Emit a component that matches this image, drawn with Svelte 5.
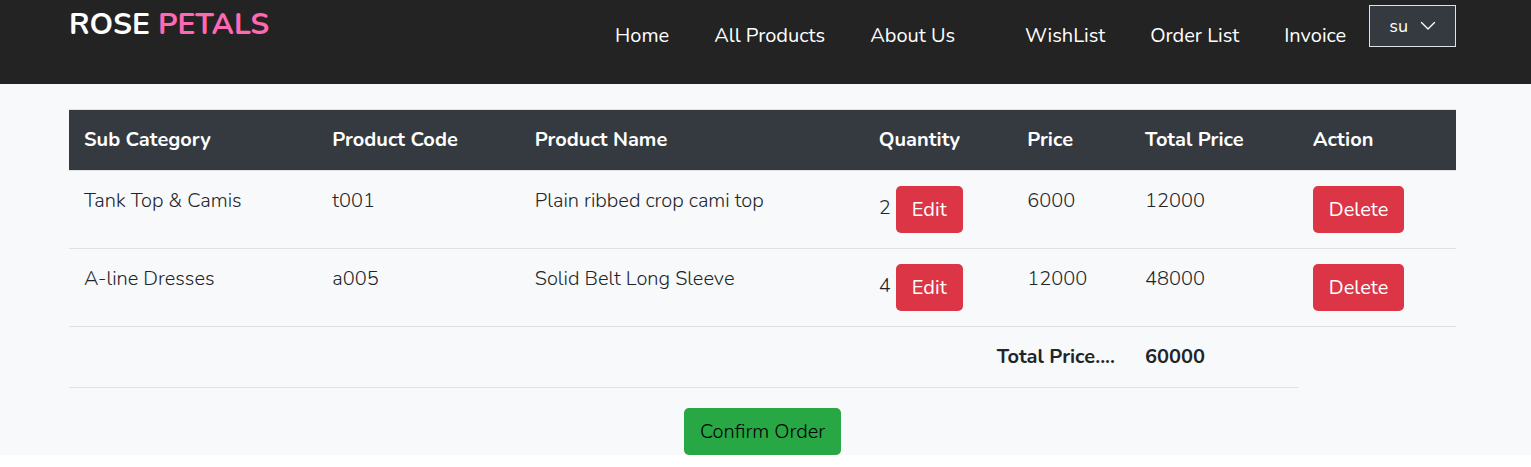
<script>
  const mainLinks = ['Home', 'All Products', 'About Us'];
  const userLinks = ['WishList', 'Order List', 'Invoice'];
  const columns = [
    { label: 'Sub Category', width: 17.9 },
    { label: 'Product Code', width: 14.6 },
    { label: 'Product Name', width: 24.8 },
    { label: 'Quantity', width: 10.7 },
    { label: 'Price', width: 8.5 },
    { label: 'Total Price', width: 12.1 },
    { label: 'Action', width: 11.4 }
  ];
  let items = $state([
    { category: 'Tank Top & Camis', code: 't001', name: 'Plain ribbed crop cami top', quantity: 2, price: 6000 },
    { category: 'A-line Dresses', code: 'a005', name: 'Solid Belt Long Sleeve', quantity: 4, price: 12000 }
  ]);
  const total = $derived(items.reduce((sum, item) => sum + item.price * item.quantity, 0));
</script>

<div class="page">
  <header>
    <a class="brand" href="#home">ROSE <span>PETALS</span></a>
    <nav>
      <ul>
        {#each mainLinks as link}<li><a href="#top">{link}</a></li>{/each}
      </ul>
      <ul>
        {#each userLinks as link}<li><a href="#top">{link}</a></li>{/each}
      </ul>
    </nav>
    <button class="user" type="button" aria-haspopup="menu">
      su
      <svg width="16" height="16" viewBox="0 0 16 16" aria-hidden="true">
        <path d="M1.500 4.500 L8 11 L14.500 4.500" fill="none" stroke="currentColor" stroke-width="1.4" stroke-linecap="round" stroke-linejoin="round" />
      </svg>
    </button>
  </header>

  <main>
    <table>
      <colgroup>
        {#each columns as column}<col style="width: {column.width}%" />{/each}
      </colgroup>
      <thead>
        <tr>{#each columns as column}<th scope="col">{column.label}</th>{/each}</tr>
      </thead>
      <tbody>
        {#each items as item}
          <tr>
            <td>{item.category}</td>
            <td>{item.code}</td>
            <td>{item.name}</td>
            <td>{item.quantity} <button class="btn danger" type="button">Edit</button></td>
            <td>{item.price}</td>
            <td>{item.price * item.quantity}</td>
            <td><button class="btn danger" type="button">Delete</button></td>
          </tr>
        {/each}
      </tbody>
      <tfoot>
        <tr>
          <th class="sum" colspan="5" scope="row">Total Price....</th>
          <td class="sum">{total}</td>
          <td></td>
        </tr>
      </tfoot>
    </table>
    <div class="actions">
      <button class="btn success" type="button">Confirm Order</button>
    </div>
  </main>
</div>

<style>
  :global(body) {
    background: #fff;
  }
  .page {
    background: #f8f9fb;
    color: #212529;
    font: 300 20px/30px Nunito, Lato, sans-serif;
  }
  header {
    display: flex;
    align-items: flex-start;
    height: 84px;
    padding: 0 75px 0 69px;
    box-sizing: border-box;
    background: #232323;
  }
  a {
    color: #fff;
    text-decoration: none;
    white-space: nowrap;
  }
  .brand {
    font-size: 30px;
    font-weight: 700;
    line-height: 50px;
  }
  .brand span {
    color: #ff69b4;
  }
  nav {
    display: flex;
    gap: 70px;
    margin-left: auto;
    padding-top: 21px;
    font-weight: 400;
  }
  ul {
    display: flex;
    gap: 45px;
    margin: 0;
    padding: 0;
    list-style: none;
  }
  button {
    font: inherit;
    cursor: pointer;
  }
  .user {
    display: flex;
    align-items: center;
    gap: 12px;
    height: 42px;
    margin: 5px 0 0 23px;
    padding: 0 19px;
    border: 1px solid #dee2e6;
    background: #343a40;
    color: #fff;
    font-size: 18px;
    font-weight: 400;
  }
  main {
    padding: 25px 75px 0 69px;
  }
  table {
    width: 100%;
    table-layout: fixed;
    border-collapse: separate;
    border-spacing: 0;
  }
  th,
  td {
    padding: 15px;
    border-top: 1px solid #dee2e6;
    text-align: left;
    vertical-align: top;
  }
  thead th {
    background: #343a40;
    color: #fff;
    font-weight: 700;
  }
  .sum {
    border-bottom: 1px solid #dee2e6;
    font-weight: 700;
  }
  tfoot th {
    text-align: right;
  }
  .btn {
    padding: 8px 16px;
    border: 0;
    border-radius: 5px;
    line-height: 31px;
    vertical-align: middle;
  }
  .danger {
    background: #dc3545;
    color: #fff;
    font-weight: 400;
  }
  .success {
    display: block;
    background: #28a745;
    color: #000;
  }
  .actions {
    display: flex;
    justify-content: center;
    padding-top: 20px;
  }
</style>
